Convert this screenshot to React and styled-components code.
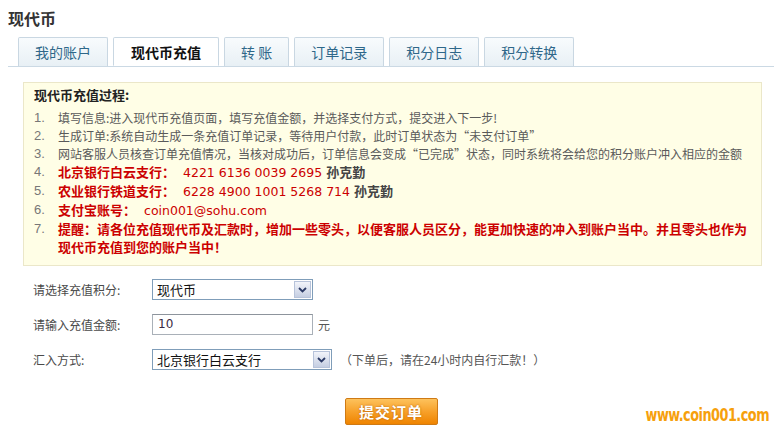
import React from 'react';
import styled, { createGlobalStyle } from 'styled-components';

const GlobalStyle = createGlobalStyle`
  html, body {
    margin: 0;
    padding: 0;
    background: #fff;
  }
  body {
    font-family: "Noto Sans CJK SC", "Noto Sans", sans-serif;
    font-size: 12px;
    color: #555;
  }
  * {
    box-sizing: border-box;
  }
`;

const Page = styled.div`
  width: 774px;
  height: 433px;
  padding: 8px 0 0 8px;
  overflow: hidden;
`;

const Title = styled.h1`
  margin: 0;
  font-size: 16px;
  line-height: 20px;
  font-weight: bold;
  color: #333;
`;

const TabBar = styled.div`
  display: flex;
  gap: 5px;
  margin-top: 9px;
  padding-left: 10px;
  border-bottom: 1px solid #cbd9e4;
`;

const Tab = styled.div`
  height: 29px;
  line-height: 28px;
  padding: 0 ${(p) => (p.$active ? '17px' : '16px')};
  margin-bottom: ${(p) => (p.$active ? '-1px' : '0')};
  border: 1px solid #c9d7e2;
  border-bottom: ${(p) => (p.$active ? '1px solid #fff' : 'none')};
  border-radius: 2px 2px 0 0;
  background: ${(p) =>
    p.$active ? '#fff' : 'linear-gradient(#f8fbfd, #e8f0f5)'};
  color: ${(p) => (p.$active ? '#111' : '#2e6789')};
  font-size: 14px;
  font-weight: ${(p) => (p.$active ? 'bold' : 'normal')};
  white-space: pre;
`;

const Notice = styled.div`
  margin: 15px 12px 0 15px;
  padding: 3px 10px 9px 10px;
  border: 1px solid #ebe7c9;
  background: #fffee6;
`;

const NoticeTitle = styled.div`
  font-size: 13px;
  font-weight: bold;
  line-height: 18px;
  color: #222;
  margin-bottom: 5px;
`;

const Steps = styled.div`
  display: grid;
  grid-template-columns: 24px 1fr;
  line-height: 18px;
`;

const Num = styled.span`
  font-family: "Liberation Sans", sans-serif;
  font-size: 13px;
  color: #777;
`;

const Text = styled.span`
  color: #5a5a5a;
  font-size: 12px;
`;

const Red = styled.span`
  color: #cc0000;
  font-size: 13px;
  font-weight: bold;
`;

const RedNum = styled.span`
  color: #cc0000;
  font-family: "DejaVu Sans", sans-serif;
  font-size: 12.5px;
  margin-left: 8px;
  margin-right: 4px;
`;

const Name = styled.span`
  color: #444;
  font-size: 13px;
  font-weight: bold;
`;

const Form = styled.div`
  display: flex;
  flex-direction: column;
  gap: 14px;
  margin-top: 13px;
  padding-left: 25px;
`;

const Row = styled.div`
  display: flex;
  align-items: center;
  height: 21px;
`;

const Label = styled.span`
  width: 119px;
  color: #4a4a4a;
`;

const Select = styled.div`
  display: flex;
  align-items: center;
  justify-content: space-between;
  width: ${(p) => p.$width}px;
  height: 21px;
  padding: 1px 1px 1px 4px;
  border: 1px solid #7f9db9;
  background: #fff;
  color: #111;
  font-size: 13px;
`;

const Arrow = styled.span`
  display: flex;
  align-items: center;
  justify-content: center;
  width: 17px;
  height: 17px;
  border: 1px solid #b7c3da;
  background: linear-gradient(#f2f4fa, #c5cee2);
`;

const Input = styled.div`
  width: 161px;
  height: 21px;
  padding: 0 5px;
  line-height: 19px;
  border: 1px solid #a9b0b8;
  border-top-color: #8d949c;
  font-family: "DejaVu Sans", sans-serif;
  font-size: 12px;
  color: #3a2a44;
`;

const Unit = styled.span`
  margin-left: 5px;
  color: #555;
`;

const Hint = styled.span`
  margin-left: 8px;
  color: #555;
`;

const Footer = styled.div`
  display: grid;
  grid-template-columns: 1fr auto 1fr;
  margin-top: 28px;
`;

const SubmitButton = styled.button`
  grid-column: 2;
  width: 93px;
  height: 27px;
  padding: 0;
  border: 1px solid #cf7a14;
  border-radius: 2px;
  background: linear-gradient(#fdc25c, #f7a12a 50%, #ef8400);
  color: #fff;
  font-family: "Noto Sans CJK SC", sans-serif;
  font-size: 15px;
  font-weight: bold;
  letter-spacing: 1px;
  text-shadow: 0 0 2px #b35a00;
`;

const Logo = styled.div`
  grid-column: 3;
  justify-self: end;
  align-self: end;
  margin: 0 5px 1px 0;
  font-family: "DejaVu Sans Condensed", "DejaVu Sans", sans-serif;
  font-size: 17px;
  font-weight: bold;
  line-height: 1;
  letter-spacing: -0.6px;
  color: #f6a00c;
  transform: scaleX(0.84);
  transform-origin: right bottom;
`;

const Chevron = () => (
  <svg width="9" height="6" viewBox="0 0 9 6">
    <path d="M1 1 L4.5 4.5 L8 1" fill="none" stroke="#2b3a66" strokeWidth="1.8" />
  </svg>
);

const tabs = ['我的账户', '现代币充值', '转 账', '订单记录', '积分日志', '积分转换'];

export default function App() {
  return (
    <Page>
      <GlobalStyle />
      <Title>现代币</Title>
      <TabBar>
        {tabs.map((t) => (
          <Tab key={t} $active={t === '现代币充值'}>
            {t}
          </Tab>
        ))}
      </TabBar>

      <Notice>
        <NoticeTitle>现代币充值过程:</NoticeTitle>
        <Steps>
          <Num>1.</Num>
          <Text>填写信息:进入现代币充值页面，填写充值金额，并选择支付方式，提交进入下一步!</Text>
          <Num>2.</Num>
          <Text>生成订单:系统自动生成一条充值订单记录，等待用户付款，此时订单状态为“未支付订单”</Text>
          <Num>3.</Num>
          <Text>网站客服人员核查订单充值情况，当核对成功后，订单信息会变成“已完成”状态，同时系统将会给您的积分账户冲入相应的金额</Text>
          <Num>4.</Num>
          <span>
            <Red>北京银行白云支行：</Red>
            <RedNum>4221 6136 0039 2695</RedNum>
            <Name>孙克勤</Name>
          </span>
          <Num>5.</Num>
          <span>
            <Red>农业银行铁道支行：</Red>
            <RedNum>6228 4900 1001 5268 714</RedNum>
            <Name>孙克勤</Name>
          </span>
          <Num>6.</Num>
          <span>
            <Red>支付宝账号：</Red>
            <RedNum>coin001@sohu.com</RedNum>
          </span>
          <Num>7.</Num>
          <Red>
            提醒：请各位充值现代币及汇款时，增加一些零头，以便客服人员区分，能更加快速的冲入到账户当中。并且零头也作为
            <br />
            现代币充值到您的账户当中！
          </Red>
        </Steps>
      </Notice>

      <Form>
        <Row>
          <Label>请选择充值积分:</Label>
          <Select $width={161}>
            现代币
            <Arrow>
              <Chevron />
            </Arrow>
          </Select>
        </Row>
        <Row>
          <Label>请输入充值金额:</Label>
          <Input>10</Input>
          <Unit>元</Unit>
        </Row>
        <Row>
          <Label>汇入方式:</Label>
          <Select $width={180}>
            北京银行白云支行
            <Arrow>
              <Chevron />
            </Arrow>
          </Select>
          <Hint>（下单后，请在24小时内自行汇款！）</Hint>
        </Row>
      </Form>

      <Footer>
        <SubmitButton>提交订单</SubmitButton>
        <Logo>www.coin001.com</Logo>
      </Footer>
    </Page>
  );
}
